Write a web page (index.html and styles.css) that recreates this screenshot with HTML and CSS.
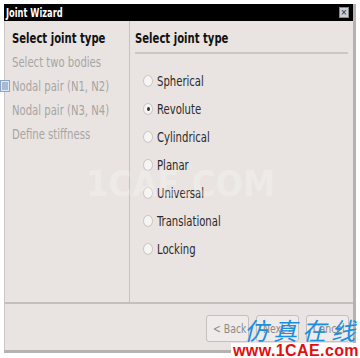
FILE: index.html
```html
<!DOCTYPE html>
<html>
<head>
<meta charset="utf-8">
<link rel="stylesheet" href="styles.css">
</head>
<body>
<div class="window">
  <div class="titlebar">
    <span class="title sq">Joint Wizard</span>
    <span class="close">×</span>
  </div>
  <div class="main">
    <div class="steps">
      <div class="step-head"><span class="sq">Select joint type</span></div>
      <div class="step"><span class="sq">Select two bodies</span></div>
      <div class="step"><span class="sq">Nodal pair (N1, N2)</span></div>
      <div class="step"><span class="sq">Nodal pair (N3, N4)</span></div>
      <div class="step"><span class="sq">Define stiffness</span></div>
    </div>
    <div class="page">
      <div class="page-head"><span class="sq">Select joint type</span></div>
      <div class="radios">
        <label class="radio"><span class="dot"></span><span class="sq">Spherical</span></label>
        <label class="radio"><span class="dot on"></span><span class="sq">Revolute</span></label>
        <label class="radio"><span class="dot"></span><span class="sq">Cylindrical</span></label>
        <label class="radio"><span class="dot"></span><span class="sq">Planar</span></label>
        <label class="radio"><span class="dot"></span><span class="sq">Universal</span></label>
        <label class="radio"><span class="dot"></span><span class="sq">Translational</span></label>
        <label class="radio"><span class="dot"></span><span class="sq">Locking</span></label>
      </div>
    </div>
  </div>
  <div class="footer">
    <button class="btn"><span class="sq">&lt; Back</span></button>
    <button class="btn"><span class="sq">Next &gt;</span></button>
    <button class="btn"><span class="sq">Cancel</span></button>
  </div>
</div>
<svg class="side-icon" width="10" height="12" viewBox="0 0 10 12"><rect x="0.5" y="0.5" width="9" height="11" fill="#dfe8f2" stroke="#8aa6c4"/><path d="M2 3h6M2 5h6M2 7h6M2 9h6" stroke="#6d8fb5" stroke-width="1"/></svg>
<div class="faint">1CAE.COM</div>
<div class="watermark">
  <div class="wm-cn">仿真在线</div>
  <div class="wm-url">www.1CAE.com</div>
</div>
</body>
</html>
```
FILE: styles.css
```css
html, body {
  margin: 0;
  padding: 0;
  background: #ffffff;
}
body {
  width: 360px;
  height: 358px;
  position: relative;
  overflow: hidden;
  font-family: "DejaVu Sans Condensed", "DejaVu Sans", sans-serif;
  font-stretch: condensed;
}
.sq {
  display: inline-block;
  transform: scaleX(0.8);
  transform-origin: left center;
  white-space: nowrap;
}
.window {
  margin: 4px 0 0 4px;
  width: 349px;
  height: 346px;
  background: #e9e4e2;
  border-right: 3px solid #b5b2b0;
  border-bottom: 3px solid #b5b2b0;
  display: flex;
  flex-direction: column;
}
.titlebar {
  height: 17px;
  background: #000;
  display: flex;
  align-items: center;
  justify-content: space-between;
  padding: 0 4px 0 2px;
  flex: none;
}
.title {
  color: #fff;
  font-weight: bold;
  font-size: 11.5px;
}
.close {
  width: 8px;
  height: 9px;
  background: #cfcfcf;
  color: #222;
  font-size: 9px;
  line-height: 9px;
  text-align: center;
  border: 1px solid #888;
}
.main {
  display: flex;
  height: 281px;
  border-left: 1px solid #c9c6c4;
  border-bottom: 2px solid #c3bfbd;
  flex: none;
}
.steps {
  width: 125px;
  border-right: 1px solid #c6c1bf;
  padding: 9px 0 0 7px;
  box-sizing: border-box;
}
.step-head {
  font-weight: bold;
  font-size: 14px;
  color: #111;
  height: 24px;
}
.step {
  font-size: 14px;
  color: #a7a4a2;
  height: 24px;
  line-height: 16px;
}
.page {
  flex: 1;
  padding: 9px 4px 0 5px;
}
.page-head {
  font-weight: bold;
  font-size: 14px;
  color: #111;
  height: 22px;
  border-bottom: 2px solid #cbc7c5;
  margin-right: 1px;
}
.radios {
  display: flex;
  flex-direction: column;
  padding-top: 19px;
  gap: 12px;
}
.radio {
  display: flex;
  align-items: center;
  font-size: 14px;
  color: #2a2a2a;
  height: 16px;
  padding-left: 8px;
}
.dot {
  width: 8px;
  height: 10px;
  border-radius: 50%;
  background: #f6f5f4;
  border: 1px solid #cac7c5;
  margin-right: 4px;
  position: relative;
  flex: none;
}
.dot.on::after {
  content: "";
  position: absolute;
  left: 2.5px;
  top: 3px;
  width: 3px;
  height: 4px;
  border-radius: 50%;
  background: #333;
}
.footer {
  flex: 1;
  display: flex;
  justify-content: flex-end;
  align-items: flex-start;
  gap: 7px;
  padding: 11px 4px 0 0;
  border-left: 1px solid #c9c6c4;
}
.btn {
  font-family: inherit;
  font-stretch: condensed;
  font-size: 13px;
  color: #8d8a88;
  background: #eeebea;
  border: 1px solid #c4c0be;
  border-radius: 3px;
  width: 43px;
  height: 27px;
  padding: 0 0 0 6px;
  text-align: left;
}
.side-icon {
  position: absolute;
  left: 0;
  top: 80px;
}
.faint {
  position: absolute;
  left: 86px;
  top: 163px;
  font-family: "DejaVu Sans", sans-serif;
  font-weight: bold;
  font-size: 36px;
  color: #ffffff;
  opacity: 0.22;
}
.watermark {
  position: absolute;
  right: 4px;
  bottom: 0;
  text-align: right;
}
.wm-cn {
  font-family: "Noto Sans CJK SC", sans-serif;
  font-size: 24px;
  line-height: 26px;
  color: #1a8fe0;
  font-style: italic;
  letter-spacing: 5px;
  margin-right: -4px;
}
.wm-url {
  font-family: "Liberation Sans", sans-serif;
  font-weight: bold;
  font-size: 16px;
  line-height: 15px;
  color: #e01010;
  background: #fff;
  padding: 0 0 0 2px;
  margin-right: -3px;
  letter-spacing: 0.4px;
}
```
